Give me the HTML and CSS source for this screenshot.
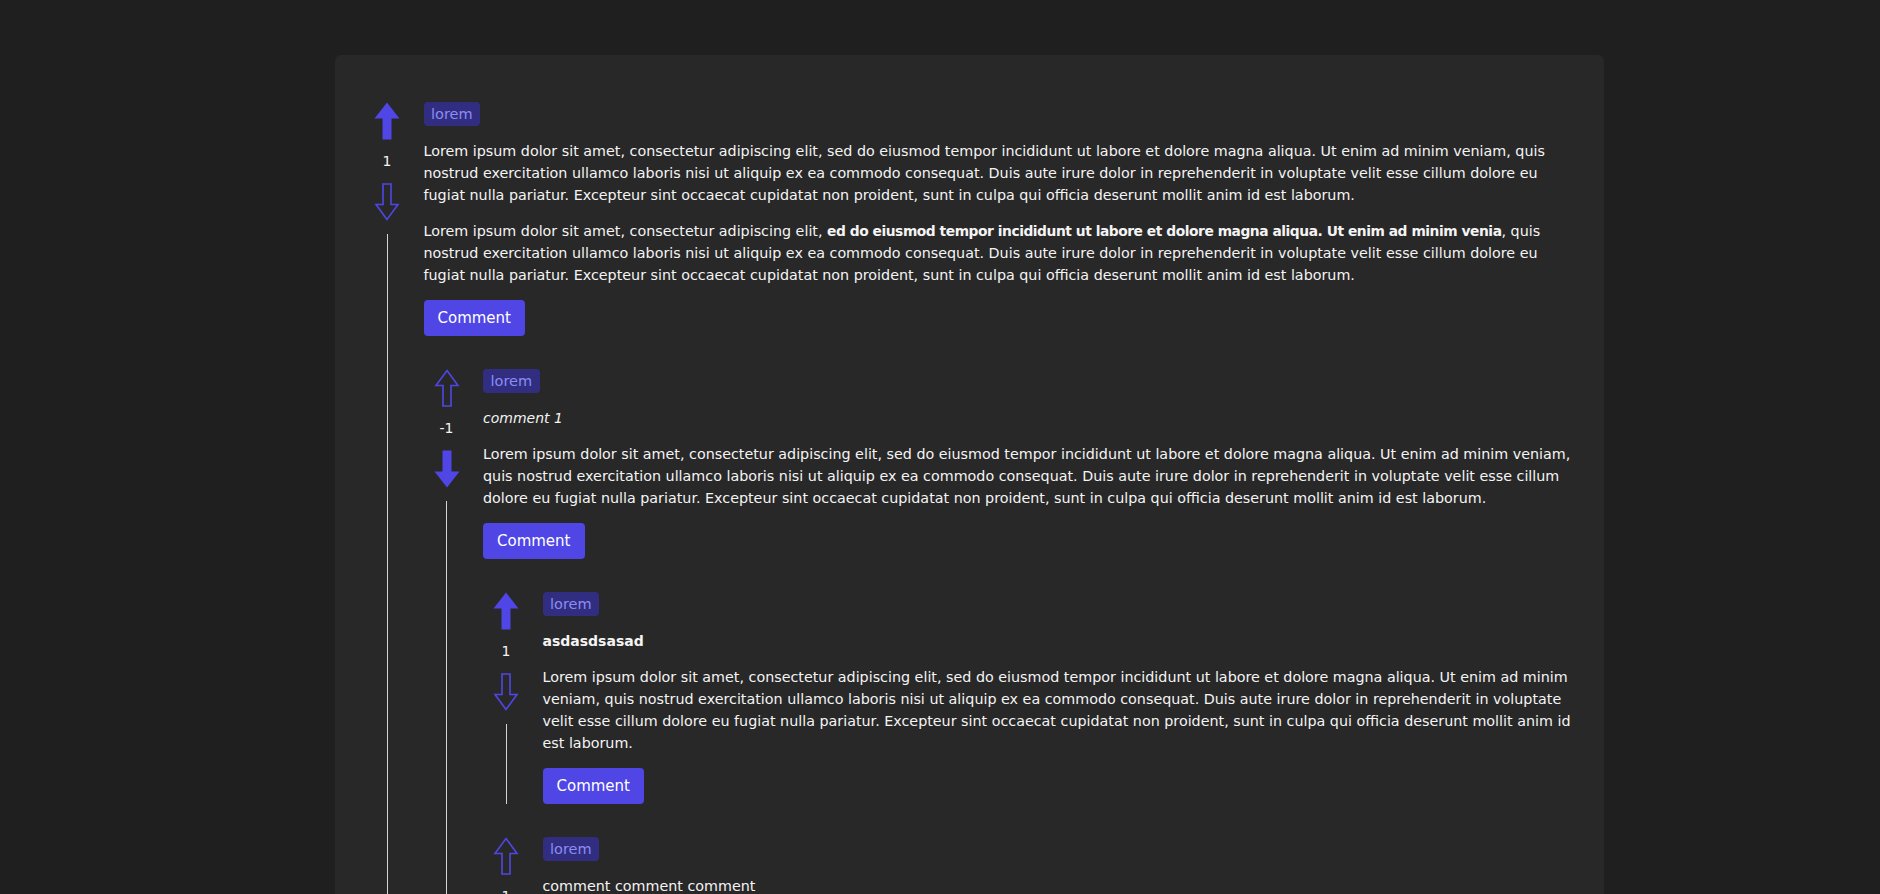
FILE: index.html
```html
<!DOCTYPE html>
<html lang="en">
<head>
<meta charset="utf-8">
<title>Comments</title>
<link rel="stylesheet" href="styles.css">
</head>
<body>
<main class="board">

  <article class="comment">
    <div class="vote">
      <svg class="arrow" viewBox="0 0 26 38"><path class="fill" d="M13 0.5 L25.5 16.5 L17.5 16.5 L17.5 37.5 L8.5 37.5 L8.5 16.5 L0.5 16.5 Z"/></svg>
      <span class="score">1</span>
      <svg class="arrow down" viewBox="0 0 26 38"><path class="outline" d="M13 1.5 L24 16.5 L17 16.5 L17 37 L9 37 L9 16.5 L2 16.5 Z"/></svg>
      <span class="thread"></span>
    </div>
    <div class="body">
      <div class="tag-row"><span class="tag">lorem</span></div>
      <p>Lorem ipsum dolor sit amet, consectetur adipiscing elit, sed do eiusmod tempor incididunt ut labore et dolore magna aliqua. Ut enim ad minim veniam, quis nostrud exercitation ullamco laboris nisi ut aliquip ex ea commodo consequat. Duis aute irure dolor in reprehenderit in voluptate velit esse cillum dolore eu fugiat nulla pariatur. Excepteur sint occaecat cupidatat non proident, sunt in culpa qui officia deserunt mollit anim id est laborum.</p>
      <p>Lorem ipsum dolor sit amet, consectetur adipiscing elit, <strong>ed do eiusmod tempor incididunt ut labore et dolore magna aliqua. Ut enim ad minim venia</strong>, quis nostrud exercitation ullamco laboris nisi ut aliquip ex ea commodo consequat. Duis aute irure dolor in reprehenderit in voluptate velit esse cillum dolore eu fugiat nulla pariatur. Excepteur sint occaecat cupidatat non proident, sunt in culpa qui officia deserunt mollit anim id est laborum.</p>
      <button class="btn">Comment</button>

      <div class="children">
        <article class="comment">
          <div class="vote">
            <svg class="arrow" viewBox="0 0 26 38"><path class="outline" d="M13 1.5 L24 16.5 L17 16.5 L17 37 L9 37 L9 16.5 L2 16.5 Z"/></svg>
            <span class="score">-1</span>
            <svg class="arrow down" viewBox="0 0 26 38"><path class="fill" d="M13 0.5 L25.5 16.5 L17.5 16.5 L17.5 37.5 L8.5 37.5 L8.5 16.5 L0.5 16.5 Z"/></svg>
            <span class="thread"></span>
          </div>
          <div class="body">
            <div class="tag-row"><span class="tag">lorem</span></div>
            <p class="title-italic">comment 1</p>
            <p>Lorem ipsum dolor sit amet, consectetur adipiscing elit, sed do eiusmod tempor incididunt ut labore et dolore magna aliqua. Ut enim ad minim veniam, quis nostrud exercitation ullamco laboris nisi ut aliquip ex ea commodo consequat. Duis aute irure dolor in reprehenderit in voluptate velit esse cillum dolore eu fugiat nulla pariatur. Excepteur sint occaecat cupidatat non proident, sunt in culpa qui officia deserunt mollit anim id est laborum.</p>
            <button class="btn">Comment</button>

            <div class="children">
              <article class="comment">
                <div class="vote">
                  <svg class="arrow" viewBox="0 0 26 38"><path class="fill" d="M13 0.5 L25.5 16.5 L17.5 16.5 L17.5 37.5 L8.5 37.5 L8.5 16.5 L0.5 16.5 Z"/></svg>
                  <span class="score">1</span>
                  <svg class="arrow down" viewBox="0 0 26 38"><path class="outline" d="M13 1.5 L24 16.5 L17 16.5 L17 37 L9 37 L9 16.5 L2 16.5 Z"/></svg>
                  <span class="thread"></span>
                </div>
                <div class="body">
                  <div class="tag-row"><span class="tag">lorem</span></div>
                  <p class="title-bold">asdasdsasad</p>
                  <p>Lorem ipsum dolor sit amet, consectetur adipiscing elit, sed do eiusmod tempor incididunt ut labore et dolore magna aliqua. Ut enim ad minim veniam, quis nostrud exercitation ullamco laboris nisi ut aliquip ex ea commodo consequat. Duis aute irure dolor in reprehenderit in voluptate velit esse cillum dolore eu fugiat nulla pariatur. Excepteur sint occaecat cupidatat non proident, sunt in culpa qui officia deserunt mollit anim id est laborum.</p>
                  <button class="btn">Comment</button>
                </div>
              </article>

              <article class="comment">
                <div class="vote">
                  <svg class="arrow" viewBox="0 0 26 38"><path class="outline" d="M13 1.5 L24 16.5 L17 16.5 L17 37 L9 37 L9 16.5 L2 16.5 Z"/></svg>
                  <span class="score">1</span>
                  <svg class="arrow down" viewBox="0 0 26 38"><path class="outline" d="M13 1.5 L24 16.5 L17 16.5 L17 37 L9 37 L9 16.5 L2 16.5 Z"/></svg>
                  <span class="thread"></span>
                </div>
                <div class="body">
                  <div class="tag-row"><span class="tag">lorem</span></div>
                  <p>comment comment comment</p>
                  <p>Lorem ipsum dolor sit amet, consectetur adipiscing elit, sed do eiusmod tempor incididunt ut labore et dolore magna aliqua.</p>
                  <button class="btn">Comment</button>
                </div>
              </article>
            </div>
          </div>
        </article>
      </div>
    </div>
  </article>

</main>
</body>
</html>
```
FILE: styles.css
```css
html, body {
  margin: 0;
  padding: 0;
  background: #1f1f1f;
}

body {
  font-family: "DejaVu Sans", "Noto Sans", sans-serif;
  font-size: 14.3px;
  line-height: 22px;
  color: #f4f4f4;
  overflow: hidden;
  height: 894px;
}

.board {
  margin: 55px 0 0 335px;
  width: 1269px;
  box-sizing: border-box;
  padding: 14px 28px 40px 29px;
  background: #282828;
  border-radius: 6px;
  min-height: 1200px;
}

.comment {
  display: flex;
  padding-top: 33px;
}

.vote {
  flex: none;
  width: 46px;
  display: flex;
  flex-direction: column;
  align-items: center;
}

.arrow {
  display: block;
  width: 26px;
  height: 38px;
}

.arrow.down {
  transform: rotate(180deg);
}

.arrow .fill {
  fill: #4f46e5;
}

.arrow .outline {
  fill: none;
  stroke: #4f46e5;
  stroke-width: 1.6;
  stroke-linejoin: miter;
}

.score {
  display: block;
  height: 24px;
  line-height: 24px;
  margin: 9px 0 10px;
  font-size: 14px;
  color: #f4f4f4;
}

.thread {
  flex: 1;
  width: 1px;
  margin-top: 13px;
  background: #d4d4d4;
}

.body {
  flex: 1;
  min-width: 0;
  margin-left: 13.5px;
}

.tag-row {
  height: 24px;
  margin-bottom: 14px;
}

.tag {
  display: inline-block;
  height: 24px;
  line-height: 24px;
  padding: 0 7.5px;
  font-size: 14.5px;
  color: #8b8cf3;
  background: #312e81;
  border-radius: 4px;
}

p {
  margin: 0 0 14px;
}

.title-italic {
  font-style: italic;
  font-size: 14px;
}

.title-bold {
  font-weight: bold;
  font-size: 14px;
}

strong {
  font-weight: bold;
  font-size: 13.8px;
  letter-spacing: -0.45px;
}

.btn {
  display: block;
  height: 36px;
  padding: 0 14px;
  border: 0;
  border-radius: 4px;
  background: #4f46e5;
  color: #ffffff;
  font-family: inherit;
  font-size: 15px;
  cursor: pointer;
}

.children {
  display: flex;
  flex-direction: column;
}
```
